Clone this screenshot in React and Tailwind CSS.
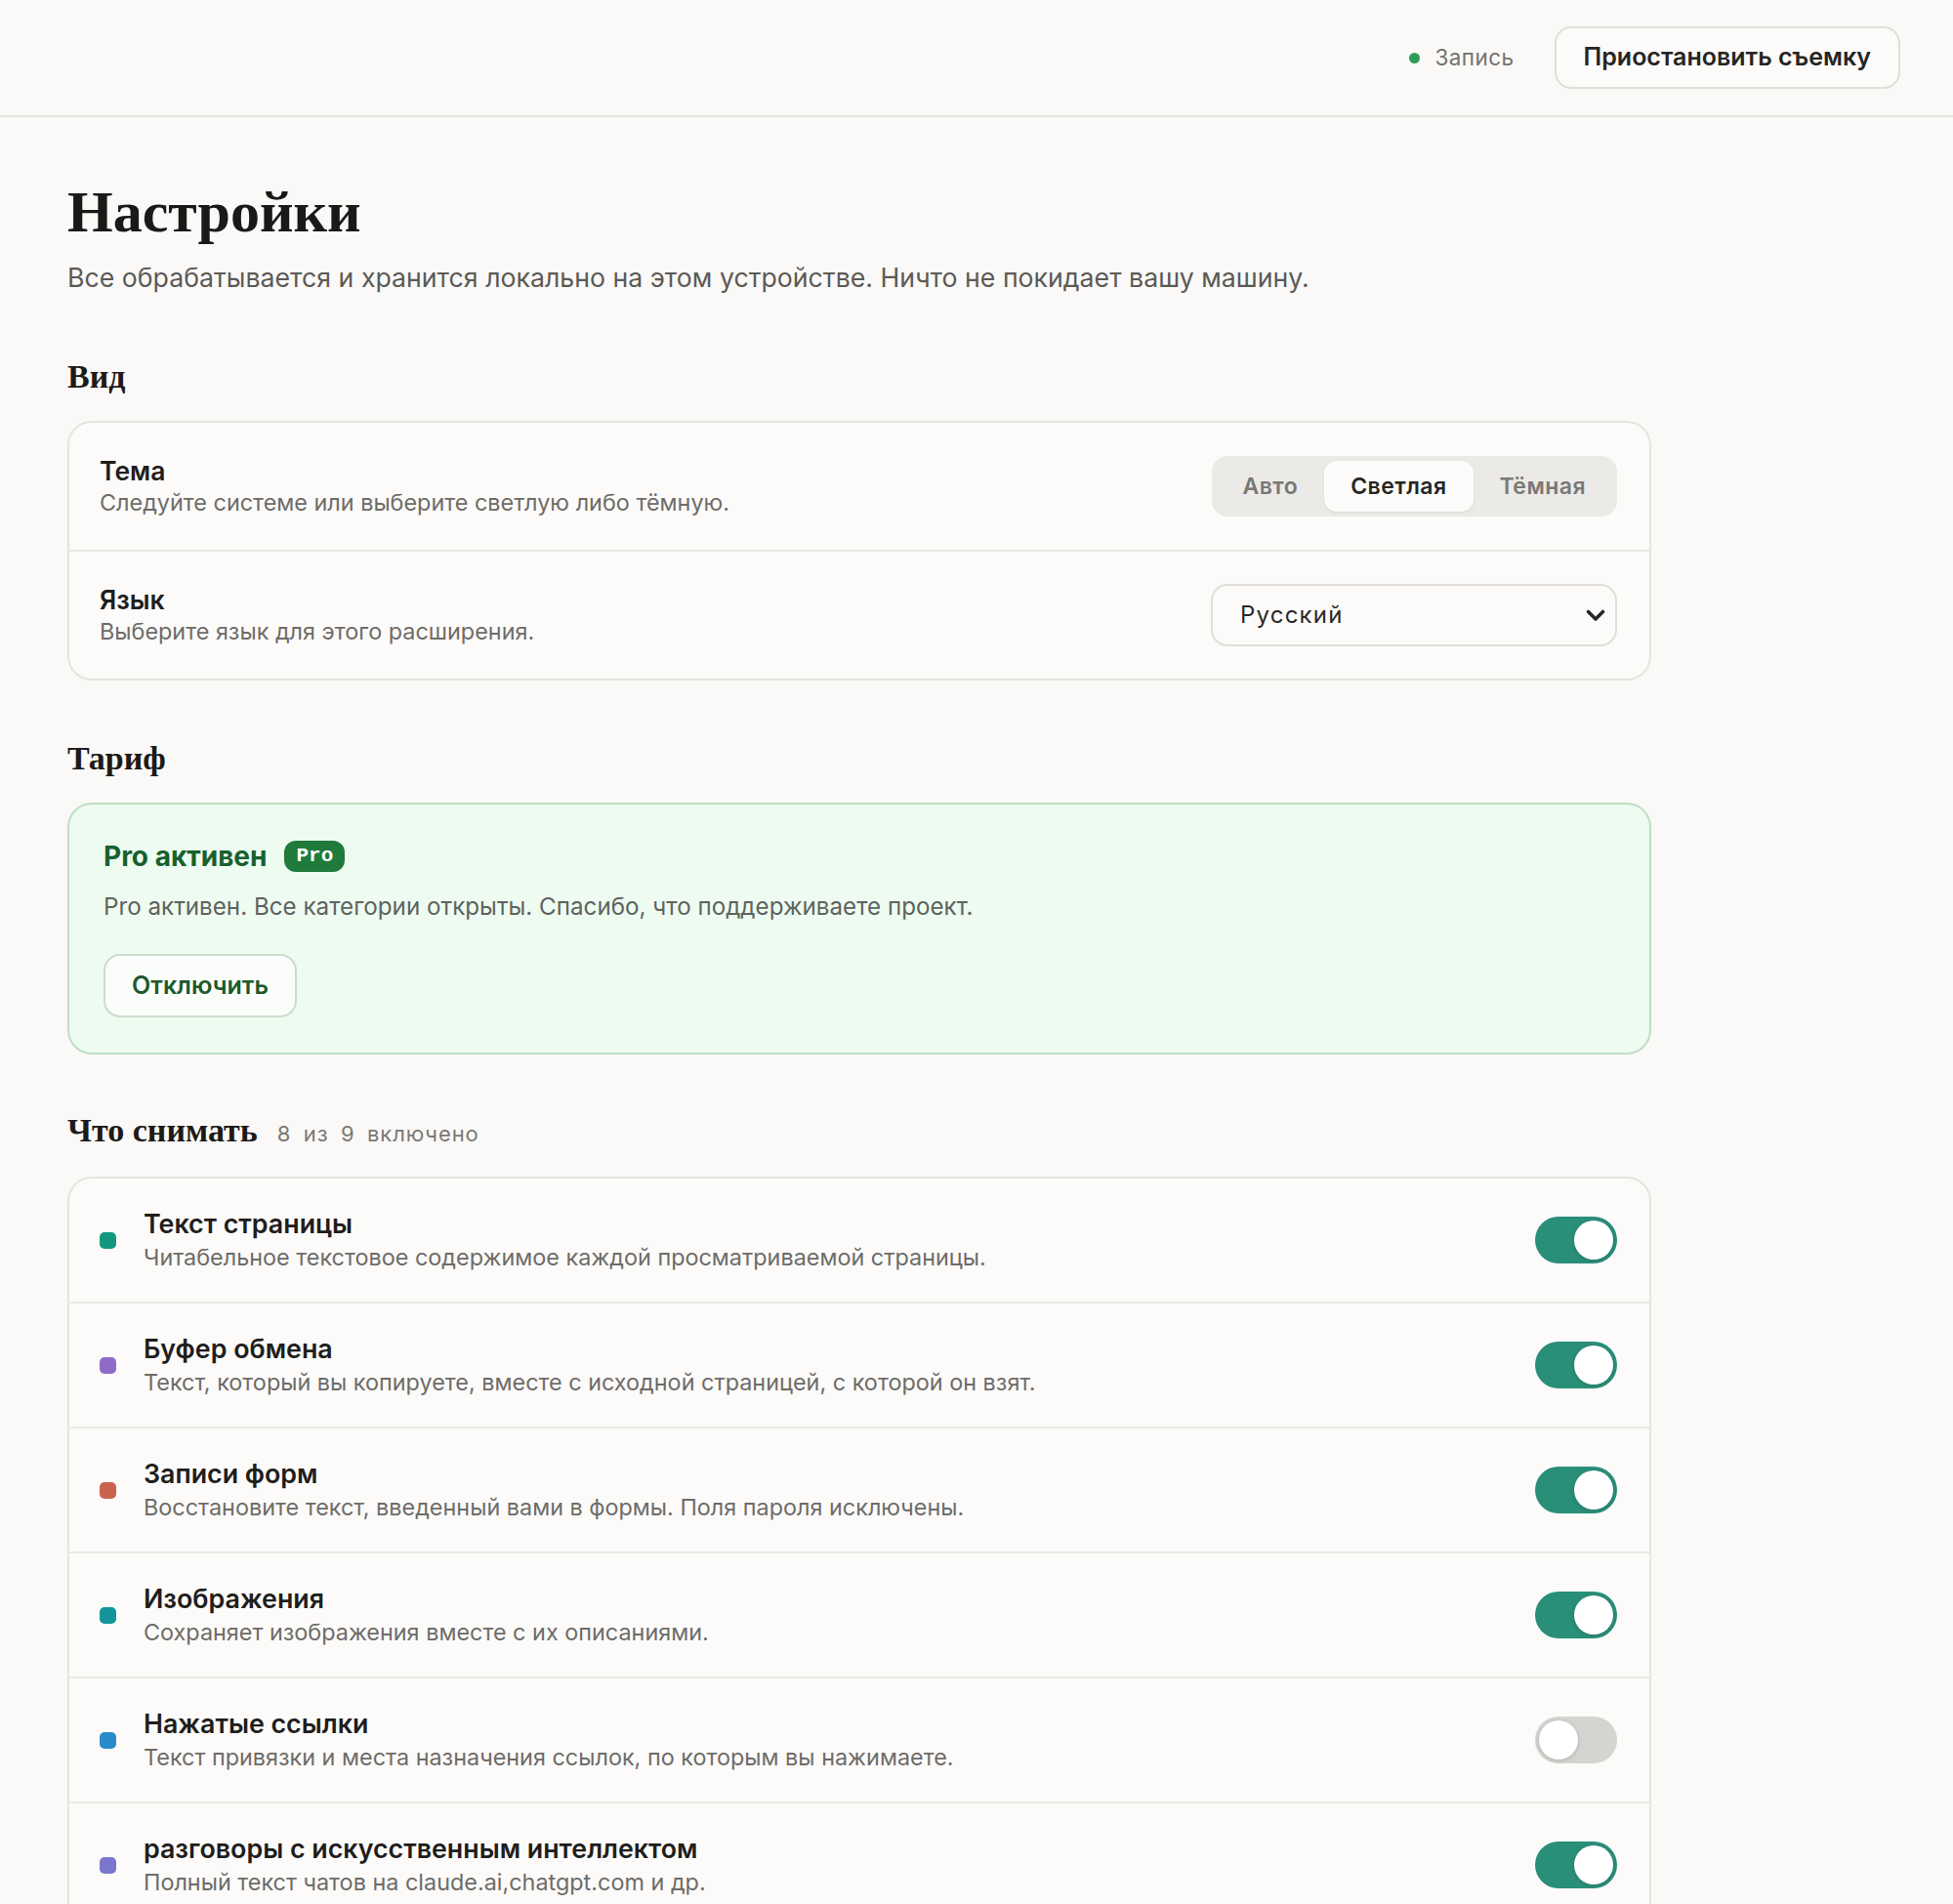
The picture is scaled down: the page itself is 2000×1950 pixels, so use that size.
import { useState } from "react";

const sans = { fontFamily: "Inter, 'Noto Sans', sans-serif" };
const serif = { fontFamily: "'Liberation Serif', 'DejaVu Serif', serif" };

const CATEGORIES = [
  { id: "text", color: "bg-[#14977f]", title: "Текст страницы", desc: "Читабельное текстовое содержимое каждой просматриваемой страницы.", on: true },
  { id: "clip", color: "bg-[#8e6cc6]", title: "Буфер обмена", desc: "Текст, который вы копируете, вместе с исходной страницей, с которой он взят.", on: true },
  { id: "forms", color: "bg-[#c9624f]", title: "Записи форм", desc: "Восстановите текст, введенный вами в формы. Поля пароля исключены.", on: true },
  { id: "img", color: "bg-[#13959b]", title: "Изображения", desc: "Сохраняет изображения вместе с их описаниями.", on: true },
  { id: "links", color: "bg-[#2a8bc9]", title: "Нажатые ссылки", desc: "Текст привязки и места назначения ссылок, по которым вы нажимаете.", on: false },
  { id: "ai", color: "bg-[#7a76cc]", title: "разговоры с искусственным интеллектом", desc: "Полный текст чатов на claude.ai,chatgpt.com и др.", on: true },
  { id: "search", color: "bg-[#c99a2e]", title: "Поисковые запросы", desc: "Что вы ищете в поисковых системах.", on: true },
  { id: "tabs", color: "bg-[#5f8f4a]", title: "История вкладок", desc: "Заголовки и адреса открытых вкладок.", on: true },
  { id: "video", color: "bg-[#b8578f]", title: "Видео", desc: "Названия и субтитры просмотренных видео.", on: true },
];

const Toggle = ({ on, onClick }) => (
  <button
    onClick={onClick}
    className={`flex items-center w-[84px] h-[48px] rounded-full p-[4px] shrink-0 ${
      on ? "bg-[#2a8f79] justify-end" : "bg-[#d6d4d1] justify-start"
    }`}
  >
    <span className="block w-[40px] h-[40px] rounded-full bg-white shadow-[0_1px_4px_rgba(0,0,0,0.18)]" />
  </button>
);

const SectionTitle = ({ children, extra }) => (
  <div className="flex items-baseline gap-[20px] mb-[27px]">
    <h2 className="text-[34px] leading-[36px] font-bold text-[#1c1b19]" style={serif}>
      {children}
    </h2>
    {extra && (
      <span className="text-[22px] tracking-[0.04em] [word-spacing:0.25em] text-[#7a7874]">{extra}</span>
    )}
  </div>
);

const App = () => {
  const [theme, setTheme] = useState("light");
  const [cats, setCats] = useState(CATEGORIES);

  const enabled = cats.filter((c) => c.on).length;

  const toggleCat = (id) => {
    setCats(cats.map((c) => (c.id === id ? { ...c, on: !c.on } : c)));
  };

  return (
    <div className="min-h-screen bg-[#faf9f7] text-[#1f1e1c]" style={sans}>
      {/* Top bar */}
      <header className="h-[120px] flex items-center justify-end pr-[54px] border-b-2 border-[#e5e3df]">
        <div className="flex items-center gap-[15px] mr-[41px]">
          <span className="w-[11px] h-[11px] rounded-full bg-[#2f9d5a]" />
          <span className="text-[22.5px] tracking-[0.02em] text-[#75736f]">Запись</span>
        </div>
        <button className="h-[64px] px-[28px] rounded-[17px] border-2 border-[#e0deda] bg-[#fcfbfa] text-[25px] font-semibold text-[#262522]">
          Приостановить съемку
        </button>
      </header>

      <main className="pl-[69px] pt-[64px] pb-[80px]">
        <div className="w-[1622px]">
          <h1 className="text-[60px] leading-[66px] font-bold text-[#1a1917]" style={serif}>
            Настройки
          </h1>
          <p className="mt-[16px] text-[26.7px] leading-[36px] text-[#5c5a56]">
            Все обрабатывается и хранится локально на этом устройстве. Ничто не покидает вашу машину.
          </p>

          {/* Appearance */}
          <section className="mt-[66px]">
            <SectionTitle>Вид</SectionTitle>
            <div className="rounded-[25px] border-2 border-[#e6e4e0] bg-[#fcfbfa]">
              <div className="flex items-center justify-between pl-[31px] pr-[33px] py-[33px] border-b-2 border-[#ebe9e5]">
                <div>
                  <div className="text-[26.5px] leading-[32px] font-semibold text-[#1f1e1c]">Тема</div>
                  <div className="mt-[2px] text-[23.4px] leading-[30px] text-[#6e6c68]">
                    Следуйте системе или выберите светлую либо тёмную.
                  </div>
                </div>
                <div className="flex items-center h-[62px] p-[5px] rounded-[16px] bg-[#ebeae7]">
                  {[
                    ["auto", "Авто"],
                    ["light", "Светлая"],
                    ["dark", "Тёмная"],
                  ].map(([key, label]) => (
                    <button
                      key={key}
                      onClick={() => setTheme(key)}
                      className={`h-full px-[27px] rounded-[13px] text-[23px] font-semibold tracking-[0.02em] ${
                        theme === key
                          ? "bg-[#fdfcfb] text-[#262522] shadow-[0_1px_3px_rgba(0,0,0,0.08)]"
                          : "text-[#7a7874]"
                      }`}
                    >
                      {label}
                    </button>
                  ))}
                </div>
              </div>
              <div className="flex items-center justify-between pl-[31px] pr-[33px] py-[33px]">
                <div>
                  <div className="text-[26.5px] leading-[32px] font-semibold text-[#1f1e1c]">Язык</div>
                  <div className="mt-[2px] text-[23.4px] leading-[30px] text-[#6e6c68]">
                    Выберите язык для этого расширения.
                  </div>
                </div>
                <button className="flex items-center justify-between w-[416px] h-[64px] pl-[28px] pr-[8px] rounded-[17px] border-2 border-[#e0deda] bg-[#fcfbfa]">
                  <span className="text-[24px] tracking-[0.05em] text-[#2a2927]">Русский</span>
                  <svg width="24" height="24" viewBox="0 0 24 24" fill="none">
                    <path d="M4.5 8.5l7.5 7.5 7.5-7.5" stroke="#2a2927" strokeWidth="3.6" strokeLinecap="round" strokeLinejoin="round" />
                  </svg>
                </button>
              </div>
            </div>
          </section>

          {/* Plan */}
          <section className="mt-[62px]">
            <SectionTitle>Тариф</SectionTitle>
            <div className="rounded-[25px] border-2 border-[#bfdec5] bg-[#eefbf0] px-[35px] pt-[35px] pb-[36px]">
              <div className="flex items-center gap-[18px] h-[36px]">
                <span className="text-[28px] font-bold text-[#17612e]">Pro активен</span>
                <span
                  className="px-[12px] h-[32px] flex items-center rounded-[12px] bg-[#1f7a3c] text-white text-[21px] font-bold"
                  style={{ fontFamily: "'Liberation Mono', 'DejaVu Sans Mono', monospace" }}
                >
                  Pro
                </span>
              </div>
              <p className="mt-[18px] text-[24.2px] leading-[32px] text-[#5d6460]">
                Pro активен. Все категории открыты. Спасибо, что поддерживаете проект.
              </p>
              <button className="mt-[32px] h-[65px] w-[198px] rounded-[17px] border-2 border-[#cbdccd] bg-[#fbfdfb] text-[25px] font-semibold text-[#1b5a2d]">
                Отключить
              </button>
            </div>
          </section>

          {/* Categories */}
          <section className="mt-[60px]">
            <SectionTitle extra={`${enabled} из ${cats.length} включено`}>Что снимать</SectionTitle>
            <div className="rounded-[25px] border-2 border-[#e6e4e0] bg-[#fcfbfa]">
              {cats.map((c, i) => (
                <div
                  key={c.id}
                  className={`flex items-center pl-[31px] pr-[33px] py-[30px] ${
                    i < cats.length - 1 ? "border-b-2 border-[#ebe9e5]" : ""
                  }`}
                >
                  <span className={`w-[17px] h-[17px] rounded-[5px] shrink-0 ${c.color}`} />
                  <div className="ml-[28px] flex-1">
                    <div className="text-[26.8px] leading-[33px] font-semibold text-[#1f1e1c]">{c.title}</div>
                    <div className="mt-[3px] text-[23.4px] leading-[30px] text-[#6e6c68]">{c.desc}</div>
                  </div>
                  <Toggle on={c.on} onClick={() => toggleCat(c.id)} />
                </div>
              ))}
            </div>
          </section>
        </div>
      </main>
    </div>
  );
};

export default App;
